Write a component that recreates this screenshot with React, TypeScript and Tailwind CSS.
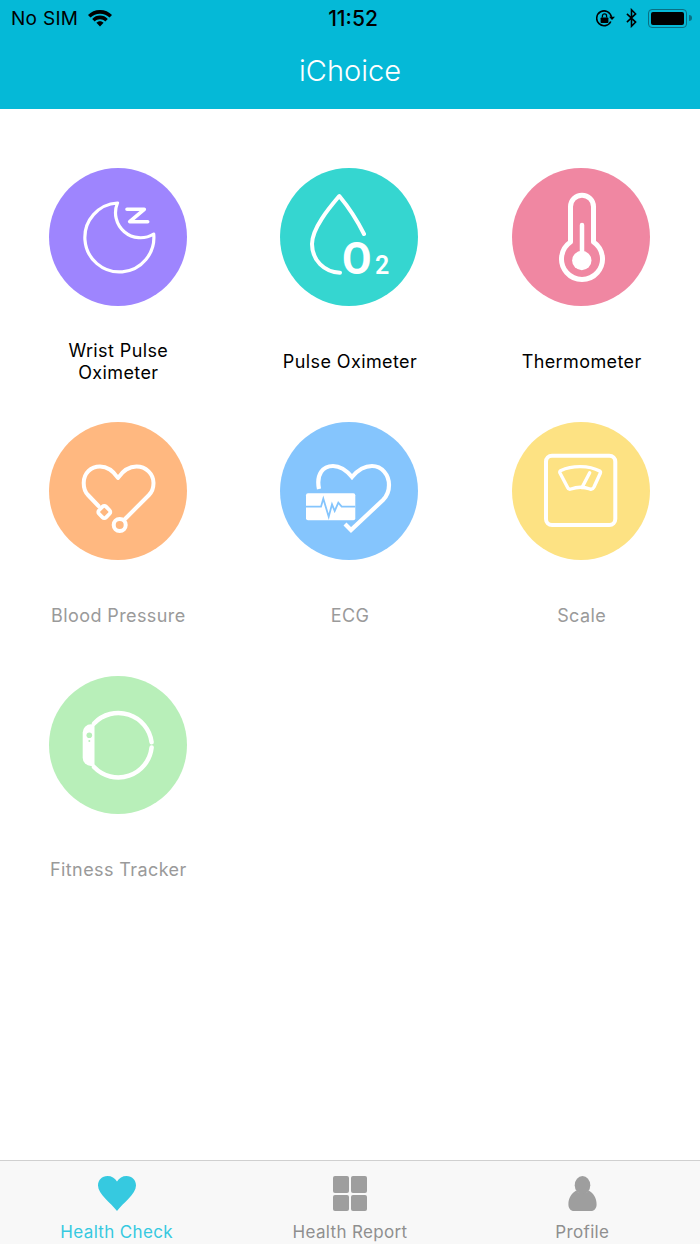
import type { ReactNode } from "react";

const FONT = "font-['Inter','Liberation_Sans',sans-serif]";

function Icon({ children }: { children: ReactNode }) {
  return (
    <svg
      viewBox="0 0 138 138"
      className="h-full w-full"
      fill="none"
      stroke="white"
      strokeLinecap="round"
      strokeLinejoin="round"
    >
      {children}
    </svg>
  );
}

function SleepIcon() {
  return (
    <Icon>
      <path strokeWidth="3.2" d="M68.5 35A34.5 34.5 0 1 0 104.7 66A25 25 0 0 1 68.5 35Z" />
      <path strokeWidth="3.6" d="M78 41.3H95.3L80.7 53.7H98.7" />
    </Icon>
  );
}

function OxygenIcon() {
  return (
    <Icon>
      <path
        strokeWidth="4"
        d="M84 66C76 50 66 36 59.3 28C50 39 32 60 32 76C32 92 44 104 60 104.7"
      />
      <text
        x="62"
        y="106"
        fill="white"
        stroke="none"
        fontSize="45"
        fontWeight="700"
        fontFamily="Roboto, sans-serif"
        textLength="29.5"
        lengthAdjust="spacingAndGlyphs"
      >
        O
      </text>
      <text x="95" y="106" fill="white" stroke="none" fontSize="25" fontWeight="600" fontFamily="Roboto, sans-serif">
        2
      </text>
    </Icon>
  );
}

function ThermometerIcon() {
  return (
    <Icon>
      <path strokeWidth="5" d="M58.5 74V38.7A11.5 11.5 0 0 1 81.5 38.7V74A20.5 20.5 0 1 1 58.5 74Z" />
      <path strokeWidth="4.5" d="M70 57V90" />
      <circle cx="69.8" cy="92.5" r="9.7" fill="white" stroke="none" />
    </Icon>
  );
}

function StethoscopeIcon() {
  return (
    <Icon>
      <path
        strokeWidth="4"
        d="M49.5 84L39 73C36 70 34.7 66 34.7 61C34.7 51 42 44.5 51 44.5C59 44.5 65 50 69 56C73 50 79 44.5 87.5 44.5C97 44.5 104.5 52 104.5 61C104.5 66 103 70 100 73L76 97"
      />
      <rect x="50.3" y="85" width="10" height="10" rx="2.5" strokeWidth="3.8" transform="rotate(45 55.3 90)" />
      <circle cx="70.7" cy="103" r="6" strokeWidth="4" />
    </Icon>
  );
}

function EcgIcon() {
  return (
    <Icon>
      <path
        strokeWidth="4.2"
        strokeLinecap="butt"
        strokeLinejoin="miter"
        d="M39 67C36 52 43 44 53 44C61 44 67 49 72 55C77 49 84 44 92 44C102 44 109 53 109 63C109 69 107 74 103 78L71 108L65 102"
      />
      <rect x="26" y="71.3" width="49.3" height="27" rx="2" fill="white" stroke="none" />
      <path
        stroke="#85c5fd"
        strokeWidth="1.8"
        strokeLinejoin="miter"
        strokeLinecap="butt"
        d="M26 84.7H41L43.3 76.7L48.7 94.7L52 82.3L54.7 89L58.3 80.7L61.7 84.7H75.3"
      />
    </Icon>
  );
}

function ScaleIcon() {
  return (
    <Icon>
      <rect x="34" y="33.7" width="69.3" height="69.3" rx="6" strokeWidth="4" />
      <path
        strokeWidth="3.4"
        d="M49 48.5C60 43.2 77 43.2 87.7 49C88.6 49.6 88.6 50.6 88.2 51.5L82 65C81 67 79.8 67.5 78 67C72 64.7 65 64.7 59 67C57.4 67.5 56.2 67 55.5 65.3L48 51C47.6 50 48 49 49 48.5Z"
      />
      <path strokeWidth="3.4" d="M70 65.5L77.7 50.7" />
    </Icon>
  );
}

function WatchIcon() {
  return (
    <Icon>
      <path
        fill="white"
        stroke="none"
        d="M45.5 48.3H42A8.3 8.3 0 0 0 33.7 56.6V81.7A8.3 8.3 0 0 0 42 90H45.5Z"
      />
      <path strokeWidth="4.5" strokeLinecap="round" d="M45 47.5A33.5 33.5 0 0 1 102.6 66.2" />
      <path strokeWidth="4.5" strokeLinecap="round" d="M102.6 71.5A33.5 33.5 0 0 1 45 91" />
      <circle cx="40.3" cy="59.3" r="2.8" fill="#b8efb9" stroke="none" />
      <circle cx="40.3" cy="65" r="1" fill="#b8efb9" stroke="none" />
    </Icon>
  );
}

const devices = [
  { name: "Wrist Pulse Oximeter", color: "bg-[#9e85fe]", text: "text-black", icon: <SleepIcon /> },
  { name: "Pulse Oximeter", color: "bg-[#35d6d0]", text: "text-black", icon: <OxygenIcon /> },
  { name: "Thermometer", color: "bg-[#f087a2]", text: "text-black", icon: <ThermometerIcon /> },
  { name: "Blood Pressure", color: "bg-[#ffb880]", text: "text-[#9a9a9a]", icon: <StethoscopeIcon /> },
  { name: "ECG", color: "bg-[#85c5fd]", text: "text-[#9a9a9a]", icon: <EcgIcon /> },
  { name: "Scale", color: "bg-[#fde283]", text: "text-[#9a9a9a]", icon: <ScaleIcon /> },
  { name: "Fitness Tracker", color: "bg-[#b8efb9]", text: "text-[#9a9a9a]", icon: <WatchIcon /> },
];

function StatusBar() {
  return (
    <div className="flex h-9 items-center justify-between pl-[11px] pr-2 text-black">
      <div className="flex w-[200px] items-center gap-[10px] text-[19px] leading-none tracking-[0.3px]">
        <span>No SIM</span>
        <svg viewBox="0 0 24 17" className="h-[17px] w-6" fill="black">
          <path d="M12 0C7.2 0 3 1.9 0 5L2.5 7.6C5 5.2 8.3 3.7 12 3.7S19 5.2 21.5 7.6L24 5C21 1.9 16.8 0 12 0Z" />
          <path d="M12 5.6C9 5.6 6.3 6.8 4.2 8.9L6.7 11.5C8.1 10.1 9.9 9.3 12 9.3S15.9 10.1 17.3 11.5L19.8 8.9C17.7 6.8 15 5.6 12 5.6Z" />
          <path d="M12 11.2C10.6 11.2 9.3 11.8 8.4 12.8L12 16.6L15.6 12.8C14.7 11.8 13.4 11.2 12 11.2Z" />
        </svg>
      </div>
      <span className="ml-[3px] text-[21px] font-medium leading-none">11:52</span>
      <div className="flex w-[200px] items-center justify-end gap-[11px]">
        <svg viewBox="0 0 19 17" className="h-[17px] w-[19px]" fill="none" stroke="black">
          <path strokeWidth="1.6" d="M14.8 11.5A7.4 7.4 0 1 1 15.4 7" />
          <path fill="black" stroke="none" d="M13 6.8H19L16 10Z" />
          <rect x="4.6" y="7.6" width="7.8" height="5.4" rx="0.7" fill="black" stroke="none" />
          <path strokeWidth="1.3" d="M6.4 7.6V6A2.1 2.1 0 0 1 10.6 6V7.6" />
        </svg>
        <svg viewBox="0 0 12 20" className="h-5 w-[11px]" fill="none" stroke="black" strokeWidth="1.7">
          <path d="M1 5.5L10.5 14.5L6 19V1L10.5 5.5L1 14.5" />
        </svg>
        <div className="flex items-center gap-[2px]">
          <div className="h-[19px] w-[39px] rounded-[4px] border border-[#0a6f83] p-[2px]">
            <div className="h-full w-full rounded-[2px] bg-black" />
          </div>
          <div className="h-[6px] w-[3px] rounded-r-full bg-[#0a6f83]" />
        </div>
      </div>
    </div>
  );
}

function TabBar() {
  return (
    <nav className="grid h-[84px] grid-cols-3 border-t border-[#d0d0d0] bg-[#f8f8f8] pt-[15px] text-[17px] leading-none tracking-[0.35px]">
      <div className="flex flex-col items-center gap-[13px] text-[#36c9e0]">
        <svg viewBox="0 0 38 35" className="h-[35px] w-[38px]" fill="#36c9e0">
          <path d="M19 35C13 27 0 18 0 9.5C0 4 4 0 9.5 0C13.5 0 17 2 19 5.5C21 2 24.5 0 28.5 0C34 0 38 4 38 9.5C38 18 25 27 19 35Z" />
        </svg>
        <span>Health Check</span>
      </div>
      <div className="flex flex-col items-center gap-[13px] text-[#8f8f8f]">
        <div className="grid h-[35px] w-[34px] grid-cols-2 gap-[2px]">
          <div className="rounded-[2px] bg-[#9e9e9e]" />
          <div className="rounded-[2px] bg-[#9e9e9e]" />
          <div className="rounded-[2px] bg-[#9e9e9e]" />
          <div className="rounded-[2px] bg-[#9e9e9e]" />
        </div>
        <span>Health Report</span>
      </div>
      <div className="flex flex-col items-center gap-[13px] pr-[2px] text-[#8f8f8f]">
        <svg viewBox="0 0 29 36" className="h-[35px] w-[29px]" fill="#9e9e9e">
          <ellipse cx="14.5" cy="9.5" rx="8" ry="9.5" />
          <path d="M8 15C3 18 0 23 0 29C0 33 2 36 6 36H23C27 36 29 33 29 29C29 23 26 18 21 15C17 19.5 12 19.5 8 15Z" />
        </svg>
        <span>Profile</span>
      </div>
    </nav>
  );
}

export default function App() {
  return (
    <div className={`flex h-[1244px] w-[700px] flex-col bg-white ${FONT}`}>
      <header className="h-[109px] bg-[#05b9d7]">
        <StatusBar />
        <h1 className="pt-[15px] text-center text-[29px] font-light leading-[40px] text-white">iChoice</h1>
      </header>
      <main className="grid flex-1 grid-cols-3 content-start gap-y-1 pl-[2px] pr-[3px] pt-[59px]">
        {devices.map((d) => (
          <div key={d.name} className="flex flex-col items-center">
            <div className={`h-[138px] w-[138px] rounded-full ${d.color}`}>{d.icon}</div>
            <div className={`flex h-[112px] w-[150px] items-center justify-center pl-[1px] text-center text-[18px] leading-[22px] tracking-[0.4px] ${d.text}`}>
              {d.name}
            </div>
          </div>
        ))}
      </main>
      <TabBar />
    </div>
  );
}
